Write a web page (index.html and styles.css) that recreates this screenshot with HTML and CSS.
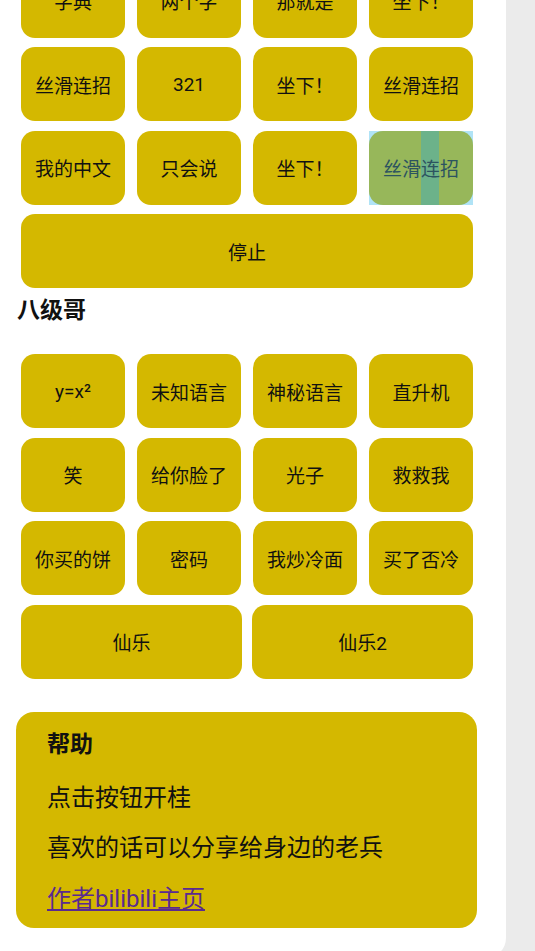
FILE: index.html
```html
<!DOCTYPE html>
<html lang="zh-CN">
<head>
  <meta charset="UTF-8" />
  <title>八级哥 音效板</title>
  <link rel="stylesheet" href="styles.css">
</head>
<body>
  <div class="panel">
    <div class="btn-grid btn-grid-top">
      <button class="sound-btn">字典</button>
      <button class="sound-btn">两个字</button>
      <button class="sound-btn">那就是</button>
      <button class="sound-btn">坐下！</button>
      <button class="sound-btn">丝滑连招</button>
      <button class="sound-btn">321</button>
      <button class="sound-btn">坐下！</button>
      <button class="sound-btn">丝滑连招</button>
      <button class="sound-btn">我的中文</button>
      <button class="sound-btn">只会说</button>
      <button class="sound-btn">坐下！</button>
      <div class="tap-wrap">
        <button class="sound-btn sound-btn-active">丝滑连招</button>
        <span class="tap-strip"></span>
      </div>
      <button class="sound-btn span-4">停止</button>
    </div>

    <h3 class="group-title">八级哥</h3>
    <div class="btn-grid">
      <button class="sound-btn">y=x²</button>
      <button class="sound-btn">未知语言</button>
      <button class="sound-btn">神秘语言</button>
      <button class="sound-btn">直升机</button>
      <button class="sound-btn">笑</button>
      <button class="sound-btn">给你脸了</button>
      <button class="sound-btn">光子</button>
      <button class="sound-btn">救救我</button>
      <button class="sound-btn">你买的饼</button>
      <button class="sound-btn">密码</button>
      <button class="sound-btn">我炒冷面</button>
      <button class="sound-btn">买了否冷</button>
      <div class="pair-row">
        <button class="sound-btn">仙乐</button>
        <button class="sound-btn">仙乐2</button>
      </div>
    </div>

    <div class="help-card">
      <h3 class="help-title">帮助</h3>
      <p class="help-line">点击按钮开桂</p>
      <p class="help-line line-2">喜欢的话可以分享给身边的老兵</p>
      <p class="help-line line-3"><a href="#" class="author-link">作者bilibili主页</a></p>
    </div>
  </div>
</body>
</html>
```

FILE: styles.css
```css
html {
  overflow: hidden;
}
body {
  margin: 0;
  padding: 0;
  background: #ebebeb;
  font-family: Roboto, "Noto Sans CJK SC", sans-serif;
  color: #111;
}
.panel {
  width: 506px;
  height: 958px;
  box-sizing: border-box;
  background: #fff;
  border-bottom-right-radius: 20px;
  overflow: hidden;
}
.btn-grid {
  display: grid;
  grid-template-columns: repeat(4, 104px);
  grid-auto-rows: 74px;
  column-gap: 12px;
  row-gap: 9.5px;
  padding-left: 21px;
}
.btn-grid-top {
  margin-top: -36.5px;
}
.sound-btn {
  background: #d4b800;
  border: none;
  border-radius: 14px;
  font-family: Roboto, "Noto Sans CJK SC", sans-serif;
  font-size: 19px;
  color: #111;
  padding: 0;
  margin: 0;
  cursor: pointer;
}
.span-4 {
  grid-column: span 4;
}
.pair-row {
  grid-column: span 4;
  display: grid;
  grid-template-columns: 1fr 1fr;
  column-gap: 10px;
}
.tap-wrap {
  position: relative;
  display: flex;
  background: #b0e3f6;
}
.tap-wrap::before {
  content: "";
  position: absolute;
  inset: 0;
  background: #97b75a;
  border-radius: 14px;
}
.tap-wrap .sound-btn-active {
  flex: 1;
  position: relative;
  z-index: 1;
  background: transparent;
  color: #2c5360;
}
.tap-strip {
  position: absolute;
  top: 0;
  bottom: 0;
  left: 52px;
  width: 18px;
  background: rgba(80, 175, 170, 0.6);
}
.group-title {
  margin: 8px 0 28px 17px;
  font-size: 23px;
  line-height: 30px;
  font-weight: 700;
}
.help-card {
  margin: 33.5px 0 0 16px;
  width: 461px;
  box-sizing: border-box;
  height: 216px;
  padding: 18px 31px 14px;
  background: #d4b800;
  border-radius: 18px;
}
.help-title {
  margin: 0;
  font-size: 23px;
  line-height: 30px;
  font-weight: 700;
}
.help-line {
  margin: 23px 0 0;
  font-size: 24px;
  line-height: 30px;
}
.help-line.line-2 {
  margin-top: 20px;
}
.help-line.line-3 {
  margin-top: 21px;
}
.author-link {
  color: #5a2a90;
  text-decoration: underline;
}
```
